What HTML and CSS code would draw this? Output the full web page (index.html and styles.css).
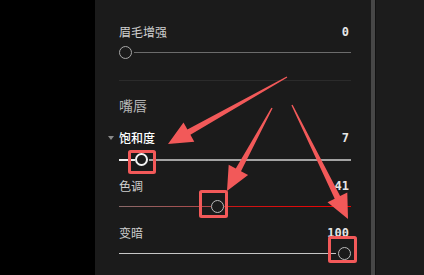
FILE: index.html
```html
<!DOCTYPE html>
<html lang="zh">
<head>
<meta charset="utf-8">
<link rel="stylesheet" href="styles.css">
</head>
<body>
<div class="screen">
  <div class="gutter"></div>
  <div class="panel">
    <div class="row r-first"><span class="label">眉毛增强</span><span class="value">0</span></div>
    <div class="slider s1">
      <span class="thumb dim"></span><span class="track t-gray"></span>
    </div>
    <div class="divider"></div>
    <div class="section">嘴唇</div>
    <div class="row r-sat"><span class="caret"></span><span class="label active">饱和度</span><span class="value">7</span></div>
    <div class="slider s2">
      <span class="track t-white"></span><span class="thumb bright"></span><span class="track t-light"></span>
    </div>
    <div class="row r-next"><span class="label">色调</span><span class="value">41</span></div>
    <div class="slider s3">
      <span class="track t-pink"></span><span class="thumb"></span><span class="track t-red"></span>
    </div>
    <div class="row r-next"><span class="label">变暗</span><span class="value">100</span></div>
    <div class="slider s4">
      <span class="track t-pale"></span><span class="thumb"></span>
    </div>
  </div>
  <div class="scrollbar"></div>
  <div class="sep"></div>
  <div class="rest"></div>

  <svg class="notes" width="424" height="275" viewBox="0 0 424 275">
    <g fill="#f25959">
      <polygon points="286.7,76.4 187.4,129.6 183.5,122.6 168,144 194.3,141.8 190.4,134.8 287.3,77.6"/>
      <polygon points="271.4,107.7 235.8,168.5 228.7,164.7 227,191 248.1,175.1 241,171.3 272.6,108.3"/>
      <polygon points="291.4,105.3 334.7,198.7 327.5,202.3 348,219 347.3,192.6 340.1,196.1 292.6,104.7"/>
    </g>
    <g fill="none" stroke="#f25959" stroke-width="3">
      <rect x="129.5" y="151.5" width="25" height="21" rx="1"/>
      <rect x="200.5" y="191.5" width="26" height="25" rx="1"/>
      <rect x="329.5" y="237.5" width="26" height="24" rx="1"/>
    </g>
  </svg>
</div>
</body>
</html>
```
FILE: styles.css
```css
* { box-sizing: border-box; }
html, body { margin: 0; padding: 0; background: #000; }
.screen {
  position: relative;
  width: 424px;
  height: 275px;
  display: flex;
  overflow: hidden;
  font-family: "Noto Sans CJK SC", "Noto Sans", sans-serif;
}
.gutter { width: 95px; background: #000; }
.panel {
  width: 276px;
  background: #1b1b1b;
  padding: 24px 20px 0 24px;
  display: flex;
  flex-direction: column;
}
.scrollbar { width: 4px; background: #474747; }
.sep { width: 1px; background: #121212; }
.rest { flex: 1; background: #1c1c1c; }

.row {
  height: 16px;
  display: flex;
  align-items: center;
  justify-content: space-between;
}
.label {
  font-size: 12px;
  line-height: 16px;
  color: #cfcfcf;
}
.label.active { color: #ffffff; font-weight: 500; margin-right: auto; }
.value {
  font-family: "DejaVu Sans Mono", monospace;
  font-weight: 700;
  font-size: 12px;
  line-height: 16px;
  color: #e6e6e6;
  margin-right: 2px;
}
.caret {
  width: 0; height: 0;
  border-left: 3px solid transparent;
  border-right: 3px solid transparent;
  border-top: 4px solid #8a8a8a;
  margin-left: -11px;
  margin-right: 5px;
}
.r-sat { margin-top: 15px; }
.r-next { margin-top: 12px; }

.slider {
  height: 13px;
  margin-top: 6px;
  display: flex;
  align-items: center;
}
.s2 { margin-top: 7px; }
.thumb {
  width: 13px;
  height: 13px;
  border-radius: 50%;
  border: 1.5px solid #b9b9b9;
  flex: none;
}
.thumb.dim { border-color: #a8a8a8; }
.thumb.bright { border: 2.5px solid #f4f4f4; }
.track { height: 1px; flex: 1; }
.t-gray { background: #6c6c6c; margin-left: 2px; }
.t-white { flex: none; width: 16px; height: 2px; background: #f0f0f0; }
.t-light { height: 2px; background: #a3a3a3; margin-left: 1px; }
.t-pink { flex: none; width: 92px; background: linear-gradient(90deg, #8a6a6a, #b04545); }
.t-red { background: linear-gradient(90deg, #c81818, #f00000); }
.t-pale { background: #c6c6c6; margin-right: 2px; }

.divider {
  height: 1px;
  margin-top: 21px;
  background: #2b2b2b;
}
.section {
  margin-top: 14px;
  height: 20px;
  font-size: 14px;
  line-height: 20px;
  color: #b4b4b4;
}

.notes { position: absolute; left: 0; top: 0; pointer-events: none; }
```
